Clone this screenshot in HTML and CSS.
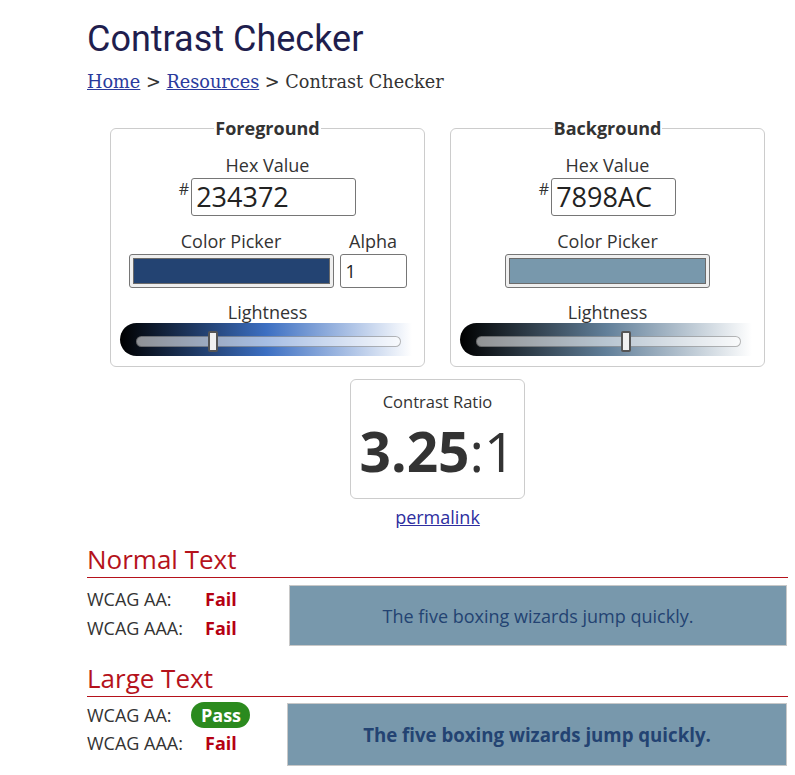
FILE: index.html
```html
<!DOCTYPE html>
<html lang="en">
<head>
<meta charset="utf-8">
<title>Contrast Checker</title>
<link rel="stylesheet" href="styles.css">
</head>
<body>
<main class="page">
  <h1 class="title">Contrast Checker</h1>
  <nav class="crumbs"><a href="#">Home</a> &gt; <a href="#">Resources</a> &gt; Contrast Checker</nav>

  <div class="pickers">
    <fieldset class="picker">
      <legend class="legend">Foreground</legend>
      <div class="lbl">Hex Value</div>
      <div class="hex-row">
        <span class="hash">#</span>
        <div class="hex-input hex-wide">234372</div>
      </div>
      <div class="row2">
        <div class="col">
          <div class="lbl">Color Picker</div>
          <div class="swatch-box"><div class="swatch swatch-fg"></div></div>
        </div>
        <div class="col">
          <div class="lbl">Alpha</div>
          <div class="alpha-input">1</div>
        </div>
      </div>
      <div class="lbl lbl-light">Lightness</div>
      <div class="slider slider-fg">
        <div class="track">
          <div class="thumb" style="left:29%"></div>
        </div>
      </div>
    </fieldset>

    <fieldset class="picker">
      <legend class="legend">Background</legend>
      <div class="lbl">Hex Value</div>
      <div class="hex-row">
        <span class="hash">#</span>
        <div class="hex-input hex-narrow">7898AC</div>
      </div>
      <div class="row2">
        <div class="col">
          <div class="lbl">Color Picker</div>
          <div class="swatch-box"><div class="swatch swatch-bg"></div></div>
        </div>
      </div>
      <div class="lbl lbl-light">Lightness</div>
      <div class="slider slider-bg">
        <div class="track">
          <div class="thumb" style="left:56.5%"></div>
        </div>
      </div>
    </fieldset>
  </div>

  <div class="ratio-box">
    <div class="ratio-label">Contrast Ratio</div>
    <div class="ratio"><b class="ratio-num">3.25</b>:1</div>
  </div>
  <div class="permalink-wrap"><a class="permalink" href="#">permalink</a></div>

  <h2 class="section">Normal Text</h2>
  <div class="results results-normal">
    <div class="checks">
      <div class="check"><span class="check-name">WCAG AA:</span><span class="fail">Fail</span></div>
      <div class="check"><span class="check-name">WCAG AAA:</span><span class="fail">Fail</span></div>
    </div>
    <div class="sample sample-normal">The five boxing wizards jump quickly.</div>
  </div>

  <h2 class="section section-large">Large Text</h2>
  <div class="results results-large">
    <div class="checks">
      <div class="check"><span class="check-name">WCAG AA:</span><span class="pass">Pass</span></div>
      <div class="check"><span class="check-name">WCAG AAA:</span><span class="fail">Fail</span></div>
    </div>
    <div class="sample sample-large">The five boxing wizards jump quickly.</div>
  </div>
</main>
</body>
</html>
```

FILE: styles.css
```css
* { box-sizing: border-box; }

body {
  margin: 0;
  font-family: "Open Sans", "DejaVu Sans", sans-serif;
  font-size: 18px;
  color: #333;
  background: #fff;
}

.page {
  width: 701px;
  margin-left: 87px;
}

.title {
  font: 400 36px/43px Roboto, sans-serif;
  color: #1f1e4e;
  margin: 18px 0 0;
}

.crumbs {
  font: 17.7px/24px "DejaVu Serif", serif;
  color: #333;
  margin-top: 9px;
}

.crumbs a { color: #2a3a9c; }

.pickers {
  display: flex;
  justify-content: center;
  gap: 25px;
  margin-top: 22px;
}

.picker {
  width: 315px;
  margin: 0;
  border: 1px solid #ccc;
  border-radius: 6px;
  padding: 13px 8px 10px;
  min-width: 0;
}

.legend {
  font: 700 18px/24px "Open Sans", sans-serif;
  color: #333;
  padding: 0 1px;
  margin: 0 auto;
}

.lbl {
  text-align: center;
  line-height: 24px;
}

.hex-row {
  display: flex;
  justify-content: center;
  margin-top: 1px;
}

.hash {
  font-size: 16px;
  line-height: 16px;
  margin-top: 3px;
  margin-right: 2px;
}

.hex-input {
  height: 38px;
  border: 1px solid #767676;
  border-radius: 3px;
  font-size: 27px;
  line-height: 36px;
  padding-left: 4px;
  color: #222;
}

.hex-wide { width: 165px; }
.hex-narrow { width: 125px; }

.row2 {
  display: flex;
  justify-content: center;
  gap: 6px;
  margin-top: 13px;
}

.col {
  display: flex;
  flex-direction: column;
  align-items: center;
}

.swatch-box {
  width: 205px;
  height: 34px;
  margin-top: 1px;
  background: #efefef;
  border: 1px solid #767676;
  border-radius: 3px;
  padding: 3px;
}

.swatch {
  height: 100%;
  border: 1px solid #6b6b6b;
}

.swatch-fg { background: #234372; }
.swatch-bg { background: #7898ac; }

.alpha-input {
  width: 67px;
  height: 34px;
  margin-top: 1px;
  border: 1px solid #767676;
  border-radius: 3px;
  font-size: 18px;
  line-height: 32px;
  padding-left: 5px;
  color: #222;
}

.lbl-light { margin-top: 12px; }

.slider {
  width: 292px;
  height: 33px;
  margin: -1px 0 0 1px;
  border-radius: 17px 0 0 17px;
  padding: 13px 11px 0 16px;
}

.slider-fg {
  background: linear-gradient(to right, #000 0%, #3c6fc2 50%, #fff 100%);
}

.slider-bg {
  background: linear-gradient(to right, #000 0%, #617f99 50%, #fff 100%);
}

.track {
  position: relative;
  height: 11px;
  border-radius: 6px;
  background: rgba(255, 255, 255, 0.55);
  border: 1px solid rgba(0, 0, 0, 0.28);
}

.thumb {
  position: absolute;
  top: -6px;
  width: 10px;
  height: 21px;
  margin-left: -5px;
  background: #f0f0f0;
  border: 2px solid #555;
  border-radius: 2px;
}

.ratio-box {
  width: 175px;
  height: 120px;
  margin: 12px auto 0;
  border: 1px solid #ccc;
  border-radius: 6px;
  padding-top: 11px;
  text-align: center;
}

.ratio-label {
  font-size: 16.5px;
  line-height: 22px;
}

.ratio {
  font-size: 55px;
  line-height: 60px;
  margin-top: 8px;
}

.ratio-num { font-weight: 700; }

.permalink-wrap {
  text-align: center;
  line-height: 24px;
  margin-top: 6px;
}

.permalink { color: #2e2ea0; }

.section {
  font: 400 26px/31px "Open Sans", sans-serif;
  color: #b5121b;
  margin: 15px 0 0;
  padding-bottom: 2px;
  border-bottom: 1px solid #b5121b;
}

.section-large { margin-top: 17px; }

.results {
  display: flex;
  align-items: flex-start;
}

.results-normal { margin-top: 7px; }
.results-large { margin-top: 6px; }

.checks {
  width: 202px;
  flex: none;
}

.results-large .checks {
  width: 200px;
  margin-top: -2px;
}

.check {
  display: flex;
  line-height: 29px;
}

.results-large .check { line-height: 28px; }

.check-name { width: 118px; }

.fail {
  font-weight: 700;
  color: #b50012;
}

.pass {
  font-weight: 700;
  color: #fff;
  background: #2b8a1e;
  border-radius: 13px;
  line-height: 26px;
  height: 26px;
  padding: 0 9px 0 10px;
  margin: 1px 0 0 -14px;
}

.sample {
  flex: 1;
  margin-right: 1px;
  background: #7898ac;
  border: 1px solid #c8c8c8;
  color: #234372;
  display: flex;
  align-items: center;
  justify-content: center;
}

.sample-normal {
  height: 61px;
  font-size: 18px;
}

.sample-large {
  height: 63px;
  font-size: 18.66px;
  font-weight: 700;
}
```
